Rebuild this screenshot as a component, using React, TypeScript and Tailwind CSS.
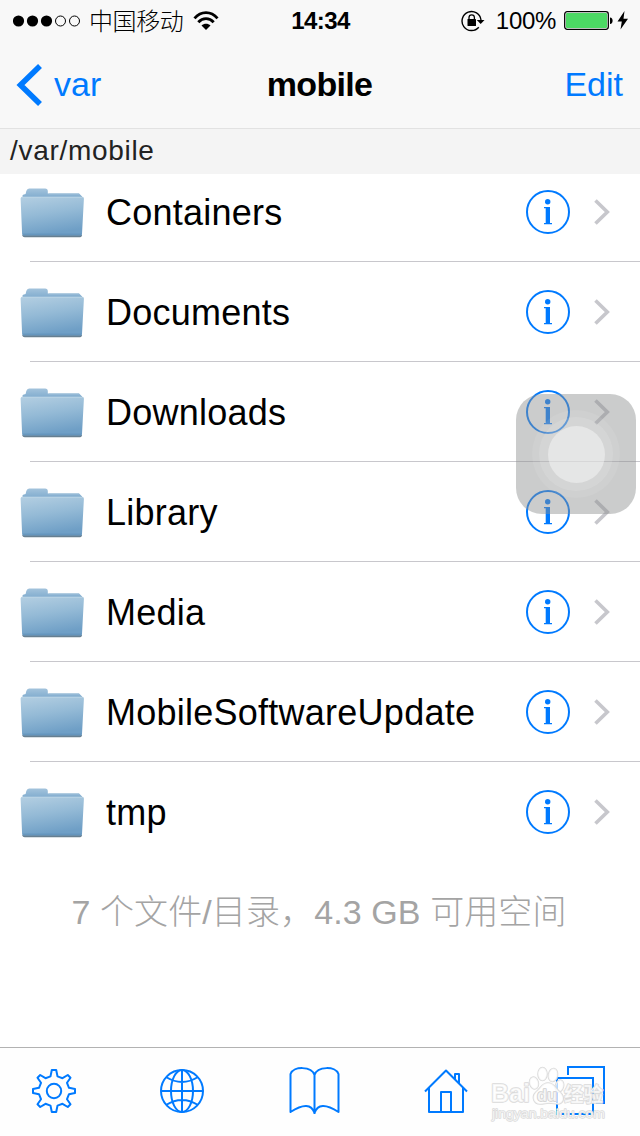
import React from 'react';

const FOLDERS = ['Containers', 'Documents', 'Downloads', 'Library', 'Media', 'MobileSoftwareUpdate', 'tmp'];

function StatusBar() {
  return (
    <div className="flex h-[41px] items-center pt-px text-black">
      <div className="flex flex-1 items-center pl-[13px]">
        <svg width="68" height="12" viewBox="0 0 68 12">
          <circle cx="5.5" cy="6" r="5.6" />
          <circle cx="19.5" cy="6" r="5.6" />
          <circle cx="33.5" cy="6" r="5.6" />
          <circle cx="47.5" cy="6" r="5" fill="none" stroke="#000" />
          <circle cx="61.5" cy="6" r="5" fill="none" stroke="#000" />
        </svg>
        <span className="ml-2 pt-px text-2xl font-light leading-[39px] tracking-[-0.4px]">中国移动</span>
        <svg className="ml-[10px]" width="26" height="20" viewBox="0 0 26 20">
          <g fill="none" stroke="#000" strokeWidth="2.8">
            <path d="M1.5 7.3C8-0.3 18-0.3 24.5 7.3" />
            <path d="M5.3 11.3C9.8 6.3 16.2 6.3 20.7 11.3" />
          </g>
          <path d="M13 19L8.5 14.6C11 12.2 15 12.2 17.5 14.6Z" />
        </svg>
      </div>
      <span className="text-2xl font-bold leading-10 tracking-[-0.6px]">14:34</span>
      <div className="flex flex-1 items-center justify-end pr-[12px]">
        <svg width="24" height="22" viewBox="0 0 24 22">
          <path d="M17.8 17.2A9.5 9.5 0 1 1 20 10" fill="none" stroke="#000" strokeWidth="1.4" />
          <path d="M15.8 10H23.5L19.7 14Z" />
          <rect x="6.5" y="9" width="8.5" height="7" rx="0.6" />
          <path d="M8 9.5V7.5a2.7 2.7 0 0 1 5.4 0V9.5" fill="none" stroke="#000" strokeWidth="1.3" />
        </svg>
        <span className="ml-[11px] text-2xl leading-10 tracking-[-0.3px]">100%</span>
        <svg className="ml-2" width="64" height="22" viewBox="0 0 64 22">
          <rect x="0.7" y="1.7" width="43.6" height="17.6" rx="2.5" fill="#fff" stroke="#000" strokeWidth="1.3" />
          <rect x="2" y="3" width="41" height="15" rx="1" fill="#4cd964" />
          <path d="M46 7.5C49.5 7.5 49.5 14 46 14Z" />
          <path d="M60.5 1L53.5 11.5H57.8L56.5 19.5L64 8.8H59.5Z" />
        </svg>
      </div>
    </div>
  );
}

function FolderIcon() {
  return (
    <svg width="66" height="52" viewBox="0 0 66 52">
      <defs>
        <linearGradient id="front" x1="0" y1="0" x2="0.25" y2="1">
          <stop offset="0" stopColor="#b4cfe2" />
          <stop offset="0.5" stopColor="#94bad6" />
          <stop offset="1" stopColor="#6f9fc6" />
        </linearGradient>
        <linearGradient id="back" x1="0" y1="0" x2="0" y2="1">
          <stop offset="0" stopColor="#a3c3dc" />
          <stop offset="1" stopColor="#76a5ca" />
        </linearGradient>
      </defs>
      <g transform="translate(0.6 0.5)">
        <path d="M2.5 48.5H62.5Q62 50.8 60.5 50.8H5Q3 50.8 2.5 48.5Z" fill="#667f91" />
        <path d="M3 12V8.5Q4 8 6 7.5L6.7 4.5Q7.5 2 9.5 2H25.5Q28.2 2 28.2 4.5V7H59.5L62.5 10V14H3Z" fill="url(#back)" />
        <path d="M29 7.3H59.5" stroke="#a9c6dc" />
        <path d="M1 12Q1 10.2 3 10.2H62Q64.5 10.2 64.3 12.5L62.4 47.5Q62.2 49 61 49H4Q2.6 49 2.5 47.5Z" fill="url(#front)" />
        <path d="M2 10.8H63" stroke="#bdd5e6" strokeWidth="0.8" />
        <path d="M3.2 47.7H62" stroke="#5d90b8" strokeWidth="0.9" />
      </g>
    </svg>
  );
}

function InfoIcon() {
  return (
    <svg width="44" height="44" viewBox="0 0 44 44">
      <circle cx="22" cy="22" r="21" fill="none" stroke="#007aff" strokeWidth="2" />
      <circle cx="21.7" cy="11.7" r="2.7" fill="#007aff" />
      <path d="M18 17H24V33H26V34.3H18V33H19.7V18.3H18Z" fill="#007aff" />
    </svg>
  );
}

function FolderRow({ name, last }: { name: string; last: boolean }) {
  return (
    <div className="h-[100px] pl-[30px]">
      <div className={`h-full border-b ${last ? 'border-transparent' : 'border-[#c8c7cc]'}`}>
        <div className="-ml-[11px] flex h-full items-center pr-[30px]">
          <FolderIcon />
          <span className="ml-[21px] flex-1 pt-[3px] text-4xl leading-10 tracking-[0.25px] text-black">{name}</span>
          <InfoIcon />
          <svg className="ml-6" width="16" height="26" viewBox="0 0 16 26">
            <path d="M1.5 1.5L13.3 13L1.5 24.5" fill="none" stroke="#c7c7cc" strokeWidth="3.6" />
          </svg>
        </div>
      </div>
    </div>
  );
}

function AssistiveTouch() {
  return (
    <div className="absolute left-[516px] top-[394px] flex size-[120px] items-center justify-center rounded-[26px] bg-[#8c8e8e]/45">
      <div className="flex size-[88px] items-center justify-center rounded-full bg-white/8">
        <div className="flex size-[74px] items-center justify-center rounded-full bg-white/12">
          <div className="size-[57px] rounded-full bg-white/40" />
        </div>
      </div>
    </div>
  );
}

function Toolbar() {
  return (
    <div className="flex h-[89px] items-center gap-[84px] border-t border-[#b2b2b2] bg-[#fefefe] pb-[3px] pl-8">
      {/* settings */}
      <svg width="44" height="44" viewBox="0 0 44 44" fill="none" stroke="#007aff" strokeWidth="2" strokeLinejoin="round">
        <path d="M19.8 1H24.2L25.5 7.4L30.5 9.2L35.8 6L38.5 8.7L35 13.8L37 18.8L43 20V24L37 25.2L35 30.2L38.5 35.3L35.8 38L30.5 34.8L25.5 36.6L24.2 43H19.8L18.5 36.6L13.5 34.8L8.2 38L5.5 35.3L9 30.2L7 25.2L1 24V20L7 18.8L9 13.8L5.5 8.7L8.2 6L13.5 9.2L18.5 7.4Z" />
        <circle cx="22" cy="22" r="7.2" />
      </svg>
      {/* web */}
      <svg width="44" height="44" viewBox="0 0 44 44" fill="none" stroke="#007aff" strokeWidth="2">
        <circle cx="22" cy="22" r="21" />
        <ellipse cx="22" cy="22" rx="11" ry="21" />
        <path d="M22 1V43M1 22H43M6 8Q22 18 38 8M6 36Q22 26 38 36" />
      </svg>
      {/* bookmarks */}
      <svg width="52" height="50" viewBox="0 0 52 50" fill="none" stroke="#007aff" strokeWidth="2" strokeLinejoin="round">
        <path d="M3 46V8C6 0 24 0 27 9C30 0 48 0 51 8V46C38 37.5 30 38 27 47C24 38 16 37.5 3 46ZM27 9V48" transform="translate(-0.5 0)" />
      </svg>
      {/* home */}
      <svg width="44" height="44" viewBox="0 0 44 44" fill="none" stroke="#007aff" strokeWidth="2" strokeLinejoin="round">
        <path d="M1 22.5L22 1.5L43 22.5M5 19V43H39V19M17 43V23H27V43M31 10V5H35V14.5" />
      </svg>
      {/* windows */}
      <svg width="53" height="50" viewBox="0 0 53 50" fill="none" stroke="#007aff" strokeWidth="2">
        <path d="M5 12H41V48H5ZM16 9V1H52V37H44" />
      </svg>
    </div>
  );
}

function Watermark() {
  return (
    <svg
      className="pointer-events-none absolute left-[488px] top-[1062px]"
      width="124"
      height="64"
      viewBox="0 0 124 64"
      fill="#fff"
      fillOpacity="0.7"
      stroke="#dadada"
      strokeWidth="1.6"
      paintOrder="stroke"
      strokeLinejoin="round"
    >
      <text x="3" y="40" fontSize="26" fontWeight="700" textLength="39" lengthAdjust="spacingAndGlyphs">Bai</text>
      <ellipse cx="46" cy="21" rx="4.3" ry="6" transform="rotate(-15 46 21)" />
      <ellipse cx="54.5" cy="12" rx="4.5" ry="6.5" />
      <ellipse cx="65" cy="13" rx="4.5" ry="6.5" transform="rotate(10 65 13)" />
      <ellipse cx="71.5" cy="24" rx="4" ry="6" transform="rotate(15 71.5 24)" />
      <path d="M60 21C54 21 53 26 48 30C43 35 46 42 52 42C56 42 58 41 61 41C65 41 67 42 70 42C76 41 77 35 72 30C67 26 66 21 60 21Z" />
      <text x="49" y="39" fontSize="17" fontWeight="700" textLength="20" lengthAdjust="spacingAndGlyphs" stroke="#cfcfcf">du</text>
      <text x="76" y="40" fontSize="20" fontWeight="700" textLength="39" lengthAdjust="spacingAndGlyphs">经验</text>
      <text x="4" y="56" fontSize="12" textLength="113" lengthAdjust="spacingAndGlyphs" strokeWidth="1.3">jingyan.baidu.com</text>
    </svg>
  );
}

export default function App() {
  return (
    <div className="relative flex h-[1136px] w-[640px] flex-col overflow-hidden bg-white font-['Liberation_Sans','Noto_Sans_CJK_SC',sans-serif]">
      <header className="h-[129px] border-b border-[#e2e2e2] bg-[#f8f8f8]">
        <StatusBar />
        <div className="flex h-[87px] items-center text-[34px] leading-[87px] text-[#007aff]">
          <div className="flex flex-1 items-center pl-4">
            <svg width="27" height="42" viewBox="0 0 27 42">
              <path d="M24 2L4.5 21L24 40" fill="none" stroke="#007aff" strokeWidth="5.6" />
            </svg>
            <span className="ml-[11px]">var</span>
          </div>
          <h1 className="font-bold tracking-[-0.7px] text-black">mobile</h1>
          <div className="flex-1 pr-[17px] text-right">Edit</div>
        </div>
      </header>

      <div className="h-[45px] bg-[#f4f4f4] pl-[10px] text-[28px] leading-[44px] tracking-[0.7px] text-[#222]">/var/mobile</div>

      <main className="min-h-0 flex-1 overflow-hidden">
        <div className="-mt-3">
          {FOLDERS.map((name, index) => (
            <FolderRow key={name} name={name} last={index === FOLDERS.length - 1} />
          ))}
        </div>
        <p className="h-[100px] whitespace-nowrap pr-[2px] text-center text-[34px] font-light leading-[100px] tracking-[0.1px] text-[#a4a4a4]">
          7 个文件/目录，4.3 GB 可用空间
        </p>
      </main>

      <Toolbar />
      <AssistiveTouch />
      <Watermark />
    </div>
  );
}
